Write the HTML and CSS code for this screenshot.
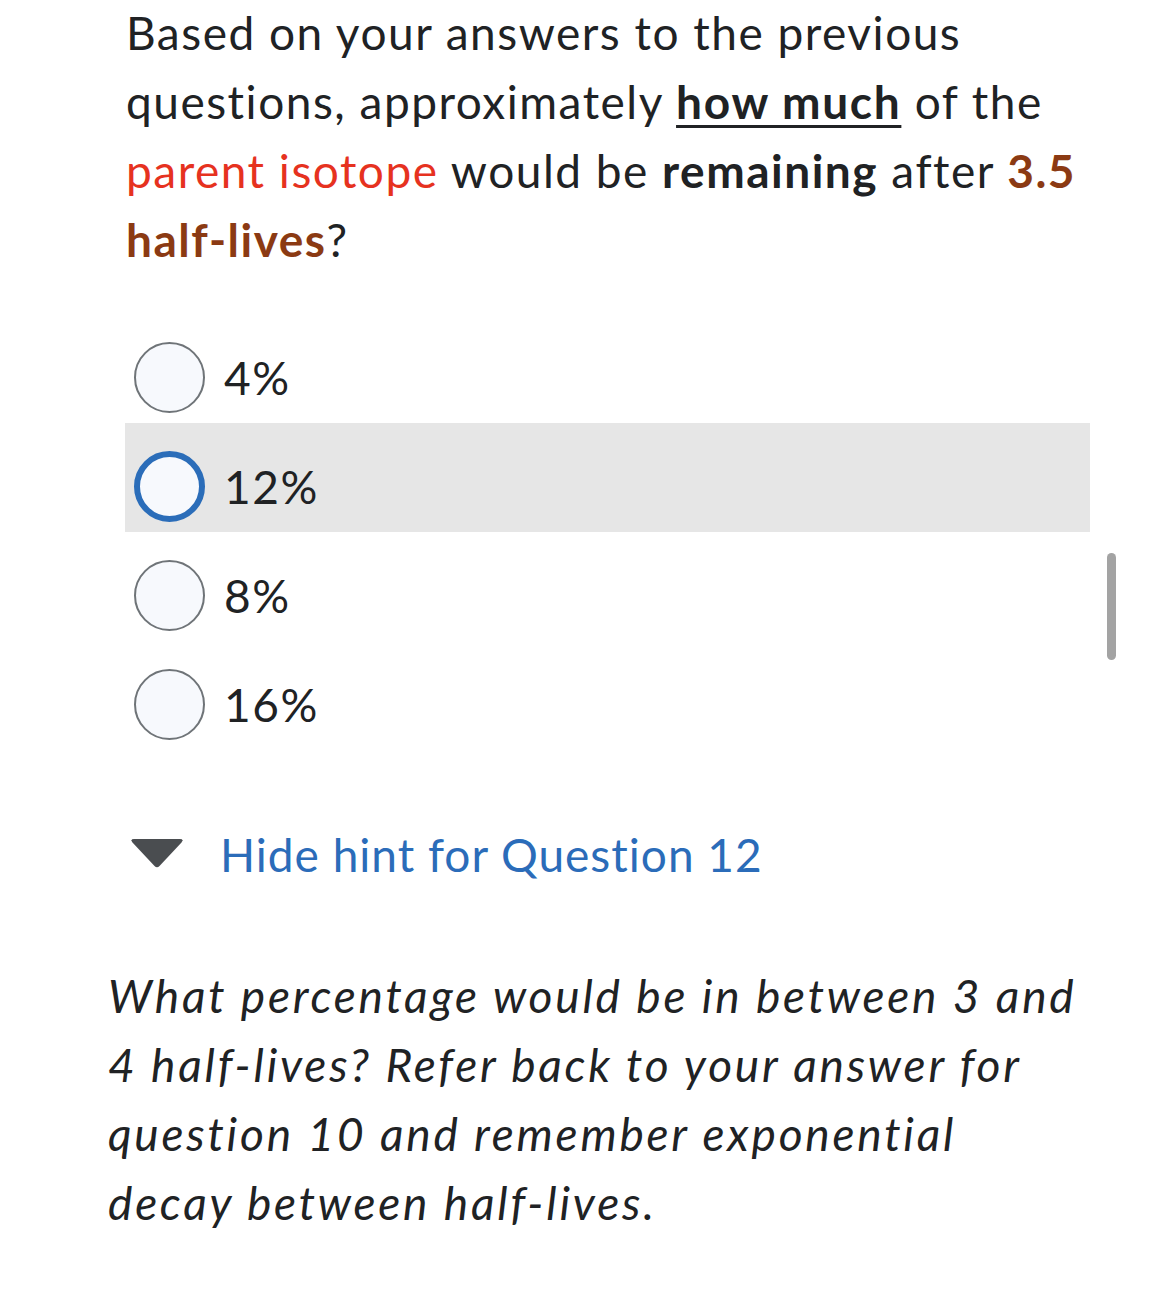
FILE: index.html
```html
<!DOCTYPE html>
<html lang="en">

<head>
  <meta charset="UTF-8">
  <meta name="viewport" content="width=device-width, initial-scale=1.0">
  <title>Question 12</title>
  <link rel="stylesheet" href="styles.css">
</head>

<body>
  <div class="question">
    <p class="prompt">
      Based on your answers to the previous questions, approximately <strong class="under">how much</strong> of the
      <span class="red">parent isotope</span> would be <strong>remaining</strong> after <strong class="brown">3.5
      half-lives</strong>?
    </p>

    <div class="options">
      <label class="option">
        <span class="radio"></span>
        <span class="option-text">4%</span>
      </label>
      <label class="option hovered">
        <span class="radio focused"></span>
        <span class="option-text">12%</span>
      </label>
      <label class="option">
        <span class="radio"></span>
        <span class="option-text">8%</span>
      </label>
      <label class="option">
        <span class="radio"></span>
        <span class="option-text">16%</span>
      </label>
    </div>

    <div class="hint-toggle">
      <svg class="caret" width="54" height="30" viewBox="0 0 54 30">
        <path d="M4 1 H50 Q54 1 51.5 4.5 L29.5 28 Q27 30.5 24.5 28 L2.5 4.5 Q0 1 4 1 Z" fill="#4a4d50" />
      </svg>
      <a href="#" class="hint-link">Hide hint for Question 12</a>
    </div>
  </div>

  <p class="hint-body">
    What percentage would be in between 3 and 4 half-lives? Refer back to your answer for question 10 and remember
    exponential decay between half-lives.
  </p>

  <div class="scrollbar"></div>
</body>

</html>
```

FILE: styles.css
```css
body {
  font-family: Lato, "Open Sans", sans-serif;
  background-color: white;
  color: #202224;
  margin: 0;
  padding: 0;
  font-size: 46px;
  line-height: 69px;
}

.question {
  margin-left: 125px;
  width: 965px;
}

.prompt {
  margin: -2px 0 0 1px;
  letter-spacing: 1.5px;
}

.under {
  letter-spacing: 1.7px;
  text-decoration: underline;
  text-decoration-thickness: 3px;
  text-underline-offset: 6px;
}

.red {
  color: #e6321f;
}

.brown {
  color: #8b3a13;
}

.options {
  margin-top: 40px;
}

.option {
  display: flex;
  align-items: flex-start;
  height: 109px;
  box-sizing: border-box;
  padding: 28px 0 0 9px;
  cursor: pointer;
}

.option.hovered {
  background-color: #e6e6e6;
}

.radio {
  width: 71px;
  height: 71px;
  box-sizing: border-box;
  border-radius: 50%;
  border: 2.5px solid #6f7478;
  background-color: #f7f9fd;
  flex-shrink: 0;
}

.radio.focused {
  border: 6px solid #2b6db9;
}

.option-text {
  margin: 1px 0 0 19px;
  letter-spacing: 1.6px;
}

.hint-toggle {
  display: flex;
  align-items: flex-start;
  margin-top: 70px;
}

.caret {
  margin: 18px 0 0 5px;
}

.hint-link {
  color: #2b6cb9;
  text-decoration: none;
  margin-left: 36px;
  letter-spacing: 1px;
}

.hint-body {
  margin: 72px 0 0 108px;
  width: 980px;
  font-style: italic;
  letter-spacing: 2.8px;
}

.scrollbar {
  position: fixed;
  left: 1107px;
  top: 553px;
  width: 9px;
  height: 107px;
  border-radius: 5px;
  background-color: #a3a3a3;
}
```
